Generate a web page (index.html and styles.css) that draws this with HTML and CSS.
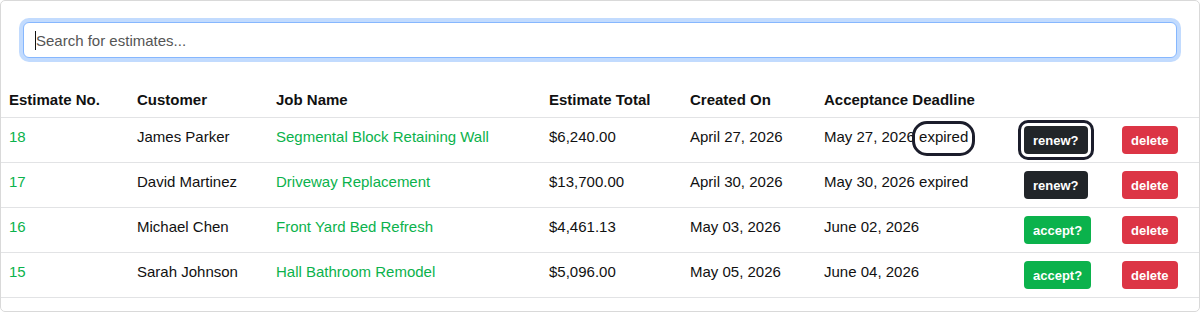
FILE: index.html
```html
<!DOCTYPE html>
<html lang="en">
<head>
<meta charset="UTF-8">
<meta name="viewport" content="width=device-width, initial-scale=1.0"/>
<title>Estimates</title>
<link rel="stylesheet" href="styles.css">
</head>
<body>
<div class="panel">
  <div class="search">
    <div class="search-box">
      <input type="text" class="search-input" placeholder="Search for estimates...">
      <span class="caret"></span>
    </div>
  </div>

  <table class="estimates">
    <colgroup>
      <col style="width:128px"><col style="width:139px"><col style="width:273px"><col style="width:141px">
      <col style="width:134px"><col style="width:200px"><col style="width:98px"><col>
    </colgroup>
    <thead>
      <tr>
        <th>Estimate No.</th><th>Customer</th><th>Job Name</th><th>Estimate Total</th>
        <th>Created On</th><th>Acceptance Deadline</th><th></th><th></th>
      </tr>
    </thead>
    <tbody>
      <tr>
        <td><a href="#">18</a></td><td>James Parker</td><td><a href="#">Segmental Block Retaining Wall</a></td>
        <td>$6,240.00</td><td>April 27, 2026</td>
        <td>May 27, 2026 <span class="status focused">expired</span></td>
        <td class="act"><button class="btn btn-dark focused">renew?</button></td>
        <td class="act"><button class="btn btn-red">delete</button></td>
      </tr>
      <tr>
        <td><a href="#">17</a></td><td>David Martinez</td><td><a href="#">Driveway Replacement</a></td>
        <td>$13,700.00</td><td>April 30, 2026</td>
        <td>May 30, 2026 <span class="status">expired</span></td>
        <td class="act"><button class="btn btn-dark">renew?</button></td>
        <td class="act"><button class="btn btn-red">delete</button></td>
      </tr>
      <tr>
        <td><a href="#">16</a></td><td>Michael Chen</td><td><a href="#">Front Yard Bed Refresh</a></td>
        <td>$4,461.13</td><td>May 03, 2026</td><td>June 02, 2026</td>
        <td class="act"><button class="btn btn-green">accept?</button></td>
        <td class="act"><button class="btn btn-red">delete</button></td>
      </tr>
      <tr>
        <td><a href="#">15</a></td><td>Sarah Johnson</td><td><a href="#">Hall Bathroom Remodel</a></td>
        <td>$5,096.00</td><td>May 05, 2026</td><td>June 04, 2026</td>
        <td class="act"><button class="btn btn-green">accept?</button></td>
        <td class="act"><button class="btn btn-red">delete</button></td>
      </tr>
    </tbody>
  </table>
</div>
</body>
</html>
```
FILE: styles.css
```css
/* ---------- GLOBAL ---------- */
html,body{margin:0;padding:0;background:#fff;color:#111;font-family:"Liberation Sans",Arial,sans-serif;font-size:15px;}
a{color:#0bb24c;text-decoration:none;}

.panel{width:1200px;height:312px;box-sizing:border-box;border:1px solid #d9d9d9;border-radius:5px;overflow:hidden;}

/* ---------- SEARCH ---------- */
.search{padding:21px 22px 0;}
.search-box{position:relative;}
.search-input{display:block;width:100%;height:36px;box-sizing:border-box;padding:6px 12px;border:1px solid #86b7fe;border-radius:6px;
  box-shadow:0 0 0 4px rgba(13,110,253,.25);outline:none;font-family:inherit;font-size:15px;color:#212529;}
.search-input::placeholder{color:#555;}
.caret{position:absolute;left:12px;top:9px;width:1px;height:19px;background:#111;}

/* ---------- TABLE ---------- */
.estimates{width:1198px;table-layout:fixed;border-collapse:collapse;margin-top:19px;}
.estimates th,.estimates td{padding:5px 8px 11px;text-align:left;vertical-align:middle;line-height:24px;border-bottom:1px solid #e2e3e5;white-space:nowrap;}
.estimates th{font-weight:700;color:#111;padding:11px 8px 5px;}
.estimates td.act{padding:8px;height:28px;}

.status{display:inline-block;line-height:18px;padding:0 0 3px;border-radius:8px;}
.status.focused{outline:3px solid #1b1d2b;outline-offset:4px;}

.btn{display:block;height:28px;padding:0 9px;border:none;border-radius:4px;color:#fff;font-family:"Liberation Sans",Arial,sans-serif;font-size:13px;font-weight:700;cursor:pointer;}
.btn-dark{background:#212529;}
.btn-green{background:#0bb24c;}
.btn-red{background:#dc3545;}
.btn.focused{outline:3px solid #1b1d2b;outline-offset:3px;}
```
